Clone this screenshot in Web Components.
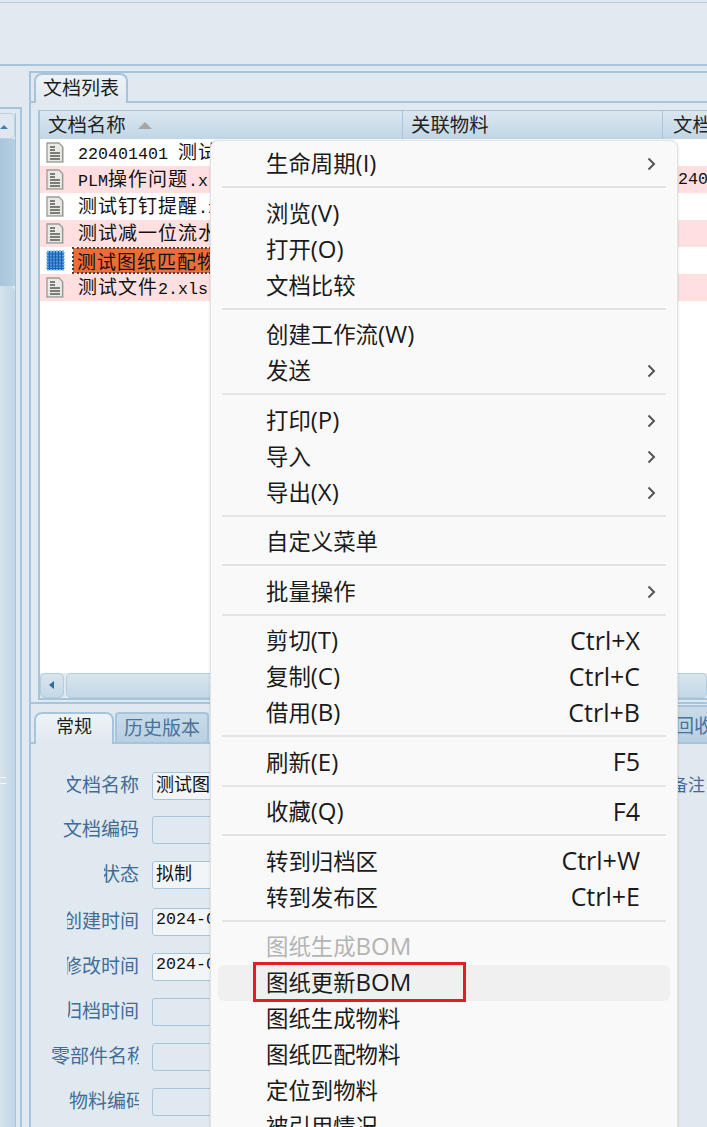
<!DOCTYPE html>
<html lang="zh">
<head>
<meta charset="utf-8">
<title>文档列表</title>
<style>
  html, body { margin: 0; height: 1127px; overflow: hidden; background: #e0e8f0; }
</style>
</head>
<body>
<erp-shell>
  <scroll-rail slot="rail"></scroll-rail>
  <doc-table slot="list">
    <doc-row name="220401401 测试"></doc-row>
    <doc-row name="PLM操作问题.x" tint extra="240"></doc-row>
    <doc-row name="测试钉钉提醒.x"></doc-row>
    <doc-row name="测试减一位流水" tint></doc-row>
    <doc-row name="测试图纸匹配物" kind="drawing" selected></doc-row>
    <doc-row name="测试文件2.xls" tint></doc-row>
  </doc-table>
  <detail-form slot="detail">
    <form-row label="文档名称" clip="72" value="测试图" light extra="备注"></form-row>
    <form-row label="文档编码" clip="76"></form-row>
    <form-row label="状态" clip="35" value="拟制" light></form-row>
    <form-row label="创建时间" clip="72" value="2024-0" light style="margin-top:2px"></form-row>
    <form-row label="修改时间" clip="72" value="2024-0" light></form-row>
    <form-row label="归档时间" clip="71"></form-row>
    <form-row label="零部件名称" clip="88" cut-end></form-row>
    <form-row label="物料编码" clip="70" cut-end></form-row>
  </detail-form>
  <context-menu slot="menu">
    <menu-item submenu>生命周期(I)</menu-item>
    <menu-sep></menu-sep>
    <menu-item>浏览(V)</menu-item>
    <menu-item>打开(O)</menu-item>
    <menu-item>文档比较</menu-item>
    <menu-sep></menu-sep>
    <menu-item>创建工作流(W)</menu-item>
    <menu-item submenu>发送</menu-item>
    <menu-sep></menu-sep>
    <menu-item submenu>打印(P)</menu-item>
    <menu-item submenu>导入</menu-item>
    <menu-item submenu>导出(X)</menu-item>
    <menu-sep></menu-sep>
    <menu-item>自定义菜单</menu-item>
    <menu-sep></menu-sep>
    <menu-item submenu>批量操作</menu-item>
    <menu-sep></menu-sep>
    <menu-item shortcut="Ctrl+X">剪切(T)</menu-item>
    <menu-item shortcut="Ctrl+C">复制(C)</menu-item>
    <menu-item shortcut="Ctrl+B">借用(B)</menu-item>
    <menu-sep></menu-sep>
    <menu-item shortcut="F5">刷新(E)</menu-item>
    <menu-sep></menu-sep>
    <menu-item shortcut="F4">收藏(Q)</menu-item>
    <menu-sep></menu-sep>
    <menu-item shortcut="Ctrl+W">转到归档区</menu-item>
    <menu-item shortcut="Ctrl+E">转到发布区</menu-item>
    <menu-sep></menu-sep>
    <menu-item disabled>图纸生成BOM</menu-item>
    <menu-item hover>图纸更新BOM</menu-item>
    <menu-item>图纸生成物料</menu-item>
    <menu-item>图纸匹配物料</menu-item>
    <menu-item>定位到物料</menu-item>
    <menu-item>被引用情况</menu-item>
  </context-menu>
</erp-shell>

<script>
const CJK = '"Noto Sans CJK SC", sans-serif';
const LINE = '#a6c5dc';

class ErpShell extends HTMLElement {
  constructor() {
    super();
    this.attachShadow({ mode: 'open' });
    this.shadowRoot.innerHTML = `
      <style>
        :host {
          display: block;
          position: relative;
          width: 707px;
          height: 1127px;
          overflow: hidden;
          background: #e0e8f0;
          font-family: ${CJK};
        }
        .toolbar {
          height: 61px;
          margin-top: 2px;
          border-top: 1px solid #b4cde0;
          border-bottom: 2px solid ${LINE};
          background: #e2e9f1;
        }
        .main {
          display: flex;
          height: 1061px;
        }
        .rail {
          width: 22px;
          margin-top: 41px;
          margin-right: 7px;
          flex: none;
        }
        .work {
          flex: 1;
          min-width: 0;
          border-left: 2px solid ${LINE};
          margin-top: 5px;
          border-top: 2px solid ${LINE};
        }
        .tabs {
          display: flex;
          box-sizing: border-box;
          height: 30px;
          padding-left: 3px;
          border-bottom: 2px solid ${LINE};
        }
        .list-wrap {
          height: 601px;
          padding: 7px 0 0 7px;
          border-bottom: 2px solid ${LINE};
          box-sizing: border-box;
        }
        .tab {
          box-sizing: border-box;
          height: 30px;
          border: 2px solid ${LINE};
          border-bottom: none;
          border-radius: 8px 8px 0 0;
          background: linear-gradient(#eef3f7, #e0e8f0);
          color: #1c1c1c;
          font-size: 19px;
          line-height: 23px;
          text-align: center;
        }
        .tab.off {
          height: 30px;
          line-height: 25px;
          background: linear-gradient(#c9dbe8, #b9d0e2);
          color: #48739b;
          border-radius: 4px 4px 0 0;
          margin-left: 1px;
        }
        .tab.far {
          margin-left: auto;
          width: 38px;
          height: 37px;
          margin-top: -7px;
          padding: 5px 0 0 4px;
          text-align: left;
          white-space: nowrap;
          border-right: none;
          border-radius: 0;
        }
        .detail-tabs {
          display: flex;
          height: 40px;
          box-sizing: border-box;
          padding: 8px 0 0 3px;
          border-bottom: 2px solid ${LINE};
        }
        .detail-tabs .tab:first-child { height: 32px; font-size: 18px; line-height: 22px; }
        .flag {
          position: absolute;
          left: 253px;
          top: 962px;
          width: 213px;
          height: 40px;
          box-sizing: border-box;
          border: 3px solid #e8192c;
        }
      </style>
      <div class="toolbar"></div>
      <div class="main">
        <div class="rail"><slot name="rail"></slot></div>
        <div class="work">
          <div class="tabs"><div class="tab" style="width:94px">文档列表</div></div>
          <div class="list-wrap"><slot name="list"></slot></div>
          <div class="detail-tabs">
            <div class="tab" style="width:80px">常规</div>
            <div class="tab off" style="width:94px">历史版本</div>
            <div class="tab off far">回收</div>
          </div>
          <slot name="detail"></slot>
        </div>
      </div>
      <slot name="menu"></slot>
      <div class="flag"></div>
    `;
  }
}

class ScrollRail extends HTMLElement {
  constructor() {
    super();
    this.attachShadow({ mode: 'open' });
    this.shadowRoot.innerHTML = `
      <style>
        :host {
          display: block;
          height: 1020px;
          box-sizing: border-box;
          border-top: 2px solid ${LINE};
          border-right: 2px solid ${LINE};
          padding-top: 4px;
        }
        .bar {
          width: 15px;
          height: 100%;
          border-right: 1.5px solid ${LINE};
          display: flex;
          flex-direction: column;
        }
        .up {
          height: 26px;
          flex: none;
          background: #dfe8f0;
          border-radius: 0 5px 5px 0;
          border: 1px solid #bcd2e2;
          border-left: none;
          box-sizing: border-box;
          position: relative;
        }
        .up::after {
          content: "";
          position: absolute;
          left: 0;
          top: 11px;
          border-left: 4px solid transparent;
          border-right: 4px solid transparent;
          border-bottom: 4px solid #3f7fae;
        }
        .track {
          height: 147px;
          flex: none;
          background: linear-gradient(90deg, #a9c5da, #b6cfe1);
        }
        .thumb {
          flex: 1;
          background: linear-gradient(90deg, #d6e3ed, #c2d6e5);
          border-radius: 0 6px 0 0;
          position: relative;
        }
        .grip {
          position: absolute;
          left: 0;
          top: 491px;
          width: 6px;
          height: 5px;
          border-top: 1px solid #f4f8fb;
          border-bottom: 1px solid #f4f8fb;
        }
      </style>
      <div class="bar">
        <div class="up"></div>
        <div class="track"></div>
        <div class="thumb"><div class="grip"></div></div>
      </div>
    `;
  }
}

class DocTable extends HTMLElement {
  constructor() {
    super();
    this.attachShadow({ mode: 'open' });
    this.shadowRoot.innerHTML = `
      <style>
        :host {
          display: block;
          box-sizing: border-box;
          height: 590px;
          border-left: 2px solid ${LINE};
          border-top: 1px solid ${LINE};
          border-bottom: 2px solid ${LINE};
          background: #fff;
        }
        .head {
          display: grid;
          grid-template-columns: 362px 260px 1fr;
          height: 28px;
          background: linear-gradient(#dbe7f0, #c0d6e6);
          color: #222;
          font-size: 19.400px;
        }
        .head div {
          display: flex;
          align-items: center;
          gap: 12px;
          height: 24px;
          padding-left: 8px;
          white-space: nowrap;
        }
        .head div + div { border-left: 1px solid #a9c6dc; height: 28px; padding-bottom: 4px; box-sizing: border-box; }
        .head div:last-child { padding-left: 10px; }
        .sort {
          width: 0;
          height: 0;
          margin-top: 4px;
          border-left: 7px solid transparent;
          border-right: 7px solid transparent;
          border-bottom: 7px solid #a6a6a6;
        }
        .rows { height: 534px; overflow: hidden; }
        .hbar {
          display: flex;
          height: 25px;
          gap: 2px;
          background: #e0e8f0;
        }
        .hbar div {
          background: linear-gradient(#d9e5ee, #c4d8e7);
          border: 1px solid #b2cce0;
          box-sizing: border-box;
          border-radius: 5px;
        }
        .left { width: 24px; position: relative; }
        .left::after {
          content: "";
          position: absolute;
          left: 8px;
          top: 7px;
          border-top: 4px solid transparent;
          border-bottom: 4px solid transparent;
          border-right: 5px solid #2f6a98;
        }
        .track { flex: 1; }
      </style>
      <div class="head">
        <div>文档名称 <span class="sort"></span></div>
        <div>关联物料</div>
        <div>文档</div>
      </div>
      <div class="rows"><slot></slot></div>
      <div class="hbar"><div class="left"></div><div class="track"></div></div>
    `;
  }
}

class DocRow extends HTMLElement {
  constructor() {
    super();
    this.attachShadow({ mode: 'open' });
  }

  // latin runs are half the width of the hanzi, so they get their own size
  mixed(text) {
    return text.replace(/[\u4e00-\u9fff]+/g, (m) => `<span class="cjk">${m}</span>`);
  }

  connectedCallback() {
    const name = this.getAttribute('name') || '';
    const extra = this.getAttribute('extra') || '';
    const icon = this.getAttribute('kind') === 'drawing'
      ? `<svg width="19" height="21" viewBox="0 0 19 21">
           <rect x="1" y="1" width="17" height="19" fill="#4f97e0" stroke="#8cc0ee" stroke-width="1.500" stroke-dasharray="2 1"/>
           <path d="M3.500 1v19M6.500 1v19M9.500 1v19M12.500 1v19M15.500 1v19M1 4h17M1 7h17M1 10h17M1 13h17M1 16h17M1 18.500h17" stroke="#1c62b2" stroke-width="1"/>
         </svg>`
      : `<svg width="18" height="21" viewBox="0 0 18 21">
           <path d="M1 1h12l3.500 3.500V20H1z" fill="#e9e9e6" stroke="#9c9c97" stroke-width="1.300"/>
           <path d="M17.500 5v16H2" fill="none" stroke="#c9c9c5"/>
           <path d="M4 5h5M4 8h5M4 11h10M4 14h10M4 17h10" stroke="#5a5a54" stroke-width="1.400"/>
         </svg>`;
    this.shadowRoot.innerHTML = `
      <style>
        :host {
          display: grid;
          grid-template-columns: 33px 329px 260px 1fr;
          height: 27px;
          align-items: center;
          background: #fff;
          color: #111;
          font-family: "Liberation Mono", monospace;
          font-size: 16.67px;
        }
        :host([tint]) { background: #ffdfe0; }
        .icon { display: flex; padding-left: 6px; }
        .name {
          padding-left: 5px;
          white-space: pre;
          overflow: hidden;
          line-height: 25px;
        }
        :host([selected]) .name {
          margin-right: 192px;
          padding-left: 4px;
          height: 25px;
          background: #ee6d36;
          outline: 2px dotted #444;
          outline-offset: -1px;
        }
        .cjk {
          font-family: ${CJK};
          font-size: 19px;
          letter-spacing: 1px;
        }
        .extra { padding-left: 16px; white-space: nowrap; }
      </style>
      <div class="icon">${icon}</div>
      <div class="name">${this.mixed(name)}</div>
      <div></div>
      <div class="extra">${extra}</div>
    `;
  }
}

class DetailForm extends HTMLElement {
  constructor() {
    super();
    this.attachShadow({ mode: 'open' });
    this.shadowRoot.innerHTML = `
      <style>
        :host {
          display: flex;
          flex-direction: column;
          gap: 17px;
          padding-top: 27px;
        }
      </style>
      <slot></slot>
    `;
  }
}

class FormRow extends HTMLElement {
  constructor() {
    super();
    this.attachShadow({ mode: 'open' });
  }

  connectedCallback() {
    const label = this.getAttribute('label') || '';
    const value = this.getAttribute('value') || '';
    const clip = this.getAttribute('clip') || '72';
    const extra = this.getAttribute('extra') || '';
    const mono = /^[\d-]+$/.test(value);
    this.shadowRoot.innerHTML = `
      <style>
        :host {
          display: grid;
          grid-template-columns: 108px 13px 400px 1fr;
          height: 28px;
          align-items: center;
          color: #3f6d97;
          font-size: 19px;
        }
        .label {
          display: flex;
          justify-content: flex-end;
          overflow: hidden;
          white-space: nowrap;
          justify-self: end;
          width: ${clip}px;
          height: 28px;
          line-height: 24px;
        }
        :host([cut-end]) .label { justify-content: flex-start; }
        .label span { flex: none; }
        .field {
          grid-column: 3;
          box-sizing: border-box;
          height: 28px;
          padding-left: 3px;
          border: 1.5px solid ${LINE};
          border-radius: 3px;
          color: #111;
          font-size: 18px;
          line-height: 21px;
          white-space: nowrap;
          overflow: hidden;
        }
        :host([light]) .field { background: #f1f5f8; }
        .field.mono { font-family: "Liberation Mono", monospace; font-size: 16.67px; }
        .extra { text-align: right; padding: 0 2px 4px 0; white-space: nowrap; font-size: 17px; }
      </style>
      <div class="label"><span>${label}</span></div>
      <div class="field ${mono ? 'mono' : ''}">${value}</div>
      <div class="extra">${extra}</div>
    `;
  }
}

class ContextMenu extends HTMLElement {
  constructor() {
    super();
    this.attachShadow({ mode: 'open' });
    this.shadowRoot.innerHTML = `
      <style>
        :host {
          position: absolute;
          left: 210px;
          top: 140px;
          width: 468px;
          height: 1000px;
          box-sizing: border-box;
          padding: 5px 7px;
          overflow: hidden;
          background: #f9f9f9;
          border: 1px solid #e2e2e2;
          border-radius: 8px;
          box-shadow: 0 0 3px rgba(0, 0, 0, 0.12);
          color: #1a1a1a;
          font-family: "Open Sans", ${CJK};
          font-size: 22.400px;
        }
      </style>
      <slot></slot>
    `;
  }
}

class MenuItem extends HTMLElement {
  constructor() {
    super();
    this.attachShadow({ mode: 'open' });
  }

  connectedCallback() {
    // the latin in these labels runs bigger than the hanzi
    this.innerHTML = this.textContent.replace(/[A-Z()]+/g, (m) => `<span>${m}</span>`);
    const shortcut = this.getAttribute('shortcut');
    const tail = this.hasAttribute('submenu')
      ? `<svg class="arrow" width="9" height="14" viewBox="0 0 9 14"><path d="M1.5 1.5L7 7l-5.500 5.500" fill="none" stroke="#555" stroke-width="2"/></svg>`
      : shortcut ? `<span class="key">${shortcut}</span>` : '';
    this.shadowRoot.innerHTML = `
      <style>
        :host {
          display: flex;
          align-items: center;
          box-sizing: border-box;
          height: 36px;
          padding: 0 30px 3px 48px;
          border-radius: 6px;
          white-space: nowrap;
        }
        :host([submenu]) { padding-right: 14px; }
        :host([disabled]) { color: #b4b4b4; }
        :host([hover]) { background: #f0f0f0; }
        ::slotted(span) { font-size: 24px; }
        .key { margin-left: auto; font-size: 25px; }
        .arrow { margin-left: auto; margin-top: 3px; }
      </style>
      <div><slot></slot></div>${tail}
    `;
  }
}

class MenuSep extends HTMLElement {
  constructor() {
    super();
    this.attachShadow({ mode: 'open' });
    this.shadowRoot.innerHTML = `
      <style>
        :host {
          display: block;
          height: 2px;
          margin: 4px 4px 7.500px;
          background: #e3e3e3;
        }
      </style>
    `;
  }
}

customElements.define('erp-shell', ErpShell);
customElements.define('scroll-rail', ScrollRail);
customElements.define('doc-table', DocTable);
customElements.define('doc-row', DocRow);
customElements.define('detail-form', DetailForm);
customElements.define('form-row', FormRow);
customElements.define('context-menu', ContextMenu);
customElements.define('menu-item', MenuItem);
customElements.define('menu-sep', MenuSep);
</script>
</body>
</html>
